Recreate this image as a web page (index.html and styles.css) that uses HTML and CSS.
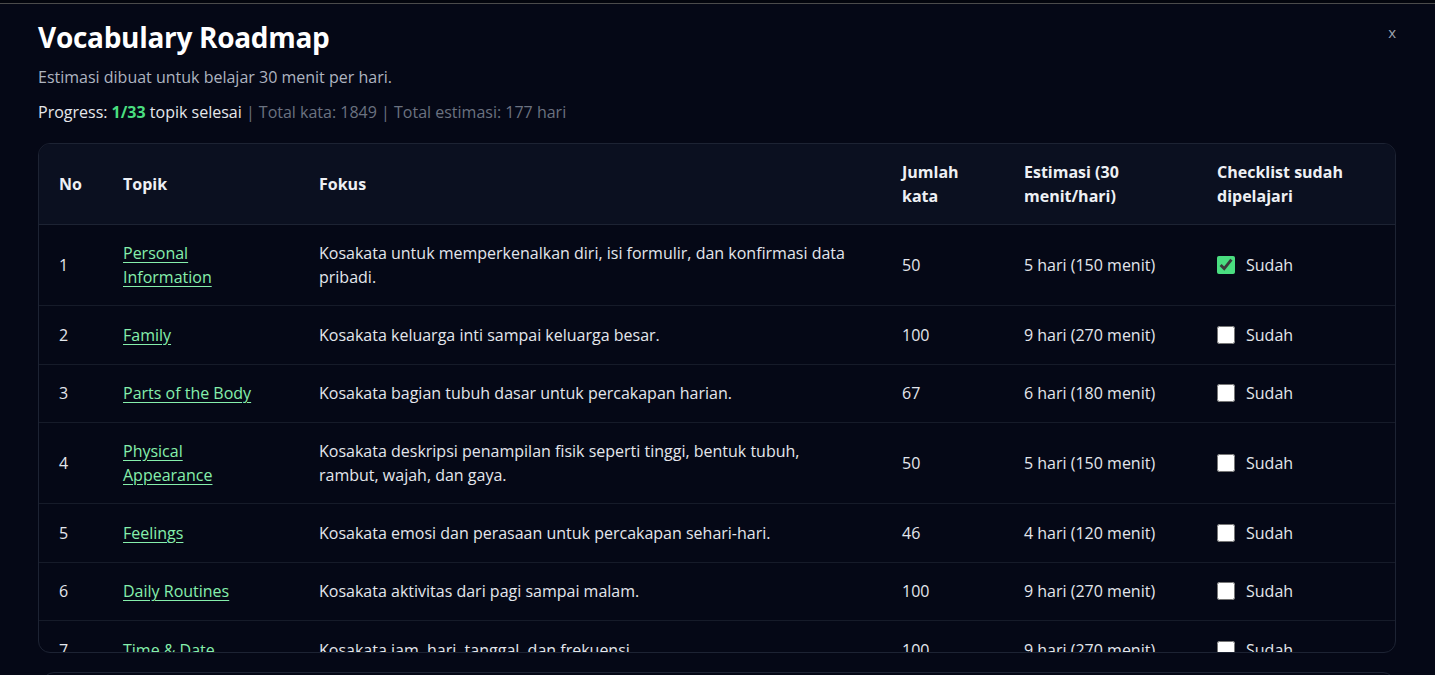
FILE: index.html
```html
<!DOCTYPE html>
<html lang="id">
<head>
<meta charset="utf-8">
<title>Vocabulary Roadmap</title>
<link rel="stylesheet" href="styles.css">
</head>
<body>
<div class="modal">
  <button class="close" type="button">x</button>
  <h2 class="title">Vocabulary Roadmap</h2>
  <p class="subtitle">Estimasi dibuat untuk belajar 30 menit per hari.</p>
  <p class="progress">Progress: <strong class="done">1/33</strong> topik selesai <span class="muted">| Total kata: 1849 | Total estimasi: 177 hari</span></p>
  <div class="table-wrap">
    <table class="roadmap">
      <colgroup>
        <col class="c-no"><col class="c-topic"><col class="c-focus"><col class="c-count"><col class="c-est"><col class="c-check">
      </colgroup>
      <thead>
        <tr><th>No</th><th>Topik</th><th>Fokus</th><th>Jumlah kata</th><th>Estimasi (30 menit/hari)</th><th>Checklist sudah dipelajari</th></tr>
      </thead>
      <tbody>
        <tr><td>1</td><td class="topic"><a href="#">Personal Information</a></td><td>Kosakata untuk memperkenalkan diri, isi formulir, dan konfirmasi data pribadi.</td><td>50</td><td>5 hari (150 menit)</td><td><label class="chk"><input type="checkbox" checked> Sudah</label></td></tr>
        <tr><td>2</td><td class="topic"><a href="#">Family</a></td><td>Kosakata keluarga inti sampai keluarga besar.</td><td>100</td><td>9 hari (270 menit)</td><td><label class="chk"><input type="checkbox"> Sudah</label></td></tr>
        <tr><td>3</td><td class="topic"><a href="#">Parts of the Body</a></td><td>Kosakata bagian tubuh dasar untuk percakapan harian.</td><td>67</td><td>6 hari (180 menit)</td><td><label class="chk"><input type="checkbox"> Sudah</label></td></tr>
        <tr><td>4</td><td class="topic"><a href="#">Physical Appearance</a></td><td>Kosakata deskripsi penampilan fisik seperti tinggi, bentuk tubuh, rambut, wajah, dan gaya.</td><td>50</td><td>5 hari (150 menit)</td><td><label class="chk"><input type="checkbox"> Sudah</label></td></tr>
        <tr><td>5</td><td class="topic"><a href="#">Feelings</a></td><td>Kosakata emosi dan perasaan untuk percakapan sehari-hari.</td><td>46</td><td>4 hari (120 menit)</td><td><label class="chk"><input type="checkbox"> Sudah</label></td></tr>
        <tr><td>6</td><td class="topic"><a href="#">Daily Routines</a></td><td>Kosakata aktivitas dari pagi sampai malam.</td><td>100</td><td>9 hari (270 menit)</td><td><label class="chk"><input type="checkbox"> Sudah</label></td></tr>
        <tr><td>7</td><td class="topic"><a href="#">Time &amp; Date</a></td><td>Kosakata jam, hari, tanggal, dan frekuensi.</td><td>100</td><td>9 hari (270 menit)</td><td><label class="chk"><input type="checkbox"> Sudah</label></td></tr>
      </tbody>
    </table>
  </div>
  <div class="next-card"></div>
</div>
</body>
</html>
```

FILE: styles.css
```css
* { box-sizing: border-box; }
html, body { margin: 0; padding: 0; }
body {
  background: #03050d;
  font-family: "Open Sans", "Noto Sans", sans-serif;
  color: #e5e7eb;
  height: 675px;
  overflow: hidden;
}
.modal {
  position: relative;
  margin-top: 3px;
  border-top: 1px solid #4b4b4b;
  background: #050816;
  padding: 16px 40px 0 38px;
  height: 672px;
  overflow: hidden;
}
.close {
  position: absolute;
  top: 18px;
  right: 39px;
  background: none;
  border: 0;
  color: #9ca3af;
  font-family: "Open Sans", sans-serif;
  font-size: 15px;
  padding: 0;
  cursor: pointer;
}
.title {
  margin: 0 0 11px;
  font-size: 28px;
  line-height: 34px;
  font-weight: 700;
  color: #ffffff;
  letter-spacing: -0.3px;
}
.subtitle {
  margin: 0 0 11px;
  font-size: 16px;
  line-height: 24px;
  color: #aeb4c0;
}
.progress {
  margin: 0 0 19px;
  font-size: 16px;
  line-height: 24px;
  color: #e5e7eb;
}
.done { color: #4ade80; font-weight: 700; }
.muted { color: #6b7280; }
.table-wrap {
  border: 1px solid #1d2333;
  border-radius: 12px;
  height: 510px;
  overflow: hidden;
  width: 1358px;
}
.roadmap {
  width: 100%;
  table-layout: fixed;
  border-collapse: collapse;
  font-size: 16px;
  line-height: 24px;
}
.c-no { width: 64px; }
.c-topic { width: 196px; }
.c-focus { width: 583px; }
.c-count { width: 122px; }
.c-est { width: 193px; }
.c-check { width: 200px; }
.roadmap th {
  background: #0b1020;
  text-align: left;
  font-weight: 700;
  color: #eef0f4;
  padding: 16px 20px 16px;
  border-bottom: 1px solid #1d2333;
  vertical-align: middle;
}
.roadmap td {
  padding: 16px 20px 16px;
  border-bottom: 1px solid #161b29;
  vertical-align: middle;
  color: #e3e6ec;
}
.roadmap td.topic { padding-right: 34px; }
.roadmap a {
  color: #86efac;
  text-decoration: underline;
  text-underline-offset: 3px;
}
.chk {
  display: flex;
  align-items: center;
  gap: 11px;
  min-height: 25.5px;
}
.chk input {
  margin: 0;
  width: 18px;
  height: 18px;
  accent-color: #4ade80;
}
.next-card {
  margin-top: 19px;
  margin-left: 4px;
  height: 40px;
  border: 1px solid #1d2333;
  border-radius: 12px;
}
```
